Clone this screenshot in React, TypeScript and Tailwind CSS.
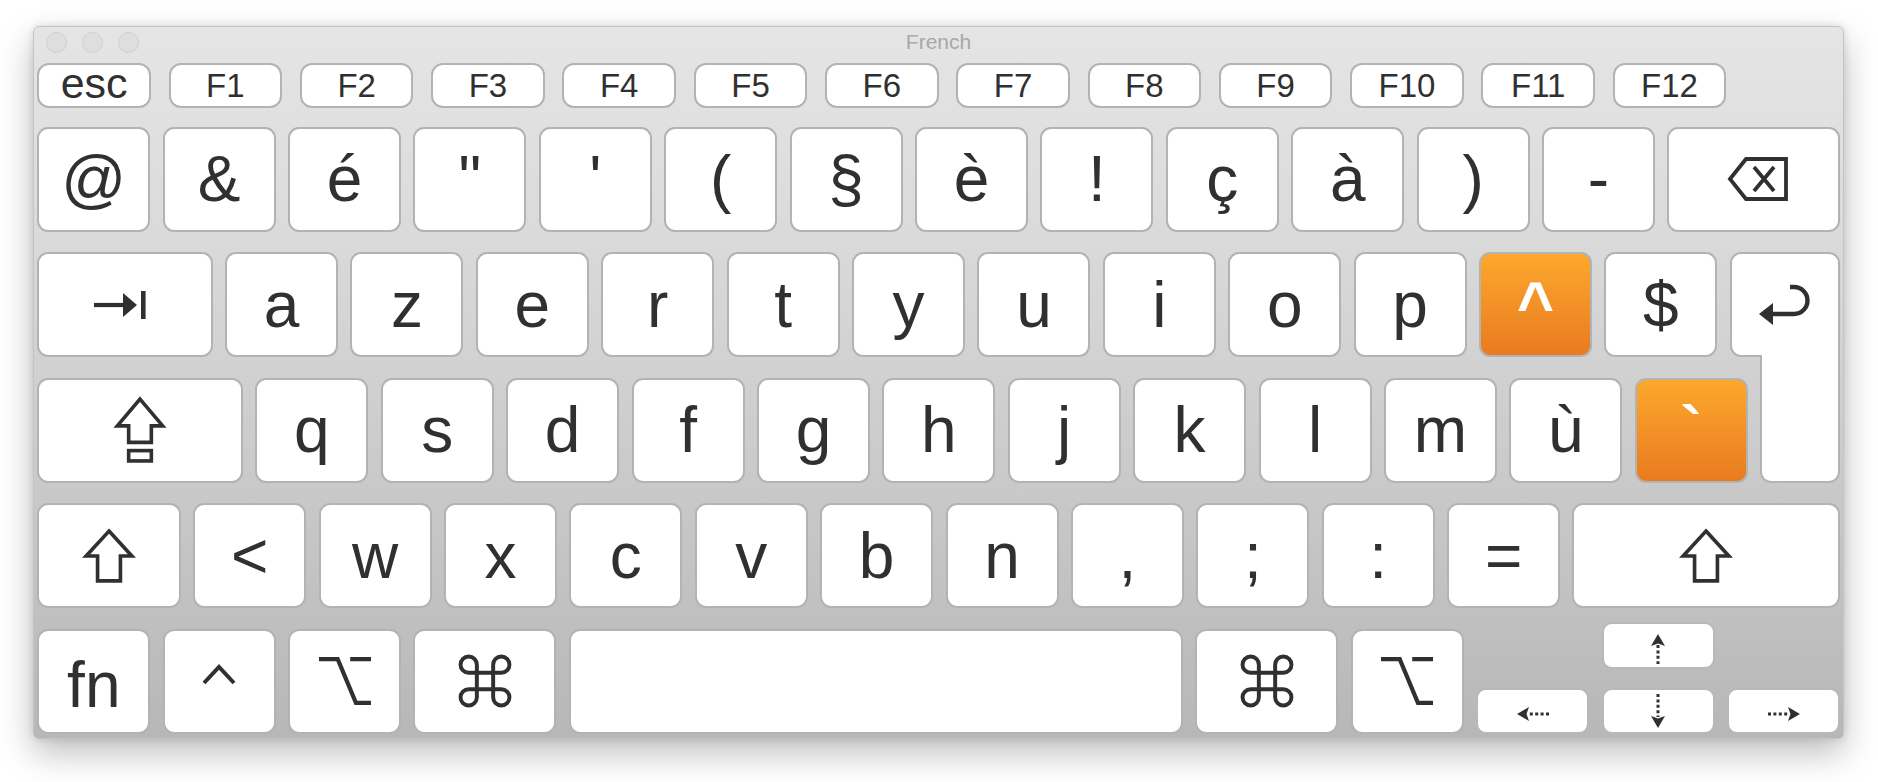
import React from "react";

const INK = "#303030";

type KeyProps = {
  w: string;
  children?: React.ReactNode;
  cls?: string;
  orange?: boolean;
};

function Key({ w, children, cls = "", orange = false }: KeyProps) {
  const tone = orange
    ? "bg-[linear-gradient(180deg,#fca82d_0%,#e97b20_100%)] text-white font-bold"
    : "bg-white text-[#303030]";
  return (
    <div
      className={`${w} ${tone} h-[105px] shrink-0 rounded-[11px] border-2 border-[#b3b3b3] flex items-center justify-center text-[64px] leading-none ${cls}`}
    >
      {children}
    </div>
  );
}

function FKey({ children, cls = "" }: { children: React.ReactNode; cls?: string }) {
  return (
    <div
      className={`w-[113.6px] h-[45px] shrink-0 rounded-[12px] border-2 border-[#b3b3b3] bg-white flex items-center justify-center leading-none text-[#303030] ${cls}`}
    >
      {children}
    </div>
  );
}

function ShiftIcon() {
  return (
    <svg width="50" height="54" viewBox="0 0 48 52" fill="none" overflow="visible">
      <path d="M24 2 L46 26 H35 V50 H13 V26 H2 Z" stroke={INK} strokeWidth="3.5" strokeLinejoin="miter" />
    </svg>
  );
}

function CapsIcon() {
  return (
    <svg width="50" height="66" viewBox="0 0 48 64" fill="none" overflow="visible">
      <path d="M24 2 L46 28 H35 V44 H13 V28 H2 Z" stroke={INK} strokeWidth="3.5" strokeLinejoin="miter" />
      <rect x="13" y="52" width="22" height="10" stroke={INK} strokeWidth="3.5" />
    </svg>
  );
}

function TabIcon() {
  return (
    <svg width="54" height="30" viewBox="0 0 54 30" fill="none">
      <line x1="0" y1="15" x2="32" y2="15" stroke={INK} strokeWidth="4.2" />
      <polygon points="29,3 43,15 29,27" fill={INK} />
      <rect x="47" y="1" width="4.6" height="28" fill={INK} />
    </svg>
  );
}

function BackspaceIcon() {
  return (
    <svg width="60" height="46" viewBox="0 0 60 46" fill="none" overflow="visible">
      <path d="M2 23 L18 3 H58 V43 H18 Z" stroke={INK} strokeWidth="3.8" strokeLinejoin="miter" />
      <path d="M26 11 L46 35 M46 11 L26 35" stroke={INK} strokeWidth="3.8" />
    </svg>
  );
}

function ReturnIcon() {
  return (
    <svg width="52" height="46" viewBox="0 0 52 46" fill="none" overflow="visible">
      <polygon points="0,31 14,20 14,42" fill={INK} />
      <path d="M12 31 H35 A13.5 13.5 0 0 0 35 4 H31" stroke={INK} strokeWidth="4.4" />
    </svg>
  );
}

function OptionIcon() {
  return (
    <svg width="52" height="50" viewBox="0 0 50 48" fill="none">
      <path d="M0 3 H18 L35.5 45 H50 M30 3 H50" stroke={INK} strokeWidth="4" />
    </svg>
  );
}

function CommandIcon() {
  return (
    <svg width="56" height="56" viewBox="1.7 1.7 20.6 20.6" fill="none">
      <path
        d="M15 6v12a3 3 0 1 0 3-3H6a3 3 0 1 0 3 3V6a3 3 0 1 0-3 3h12a3 3 0 1 0-3-3"
        stroke={INK}
        strokeWidth="1.45"
      />
    </svg>
  );
}

function ControlIcon() {
  return (
    <svg width="34" height="22" viewBox="0 0 34 22" fill="none">
      <path d="M2 19 L17 3 L32 19" stroke={INK} strokeWidth="4" />
    </svg>
  );
}

function ArrowRight() {
  return (
    <svg width="32" height="16" viewBox="0 0 32 16" fill="none">
      <line x1="0" y1="8" x2="21" y2="8" stroke={INK} strokeWidth="3.2" strokeDasharray="3 2.4" />
      <path d="M20 1 L32 8 L20 15 L22.5 8 Z" fill={INK} />
    </svg>
  );
}

function ArrowLeft() {
  return (
    <svg width="32" height="16" viewBox="0 0 32 16" fill="none">
      <line x1="32" y1="8" x2="11" y2="8" stroke={INK} strokeWidth="3.2" strokeDasharray="3 2.4" />
      <path d="M12 1 L0 8 L12 15 L9.5 8 Z" fill={INK} />
    </svg>
  );
}

function ArrowUp() {
  return (
    <svg width="16" height="30" viewBox="0 0 16 30" fill="none">
      <path d="M8 0 L15 12 L8 9.5 L1 12 Z" fill={INK} />
      <line x1="8" y1="11" x2="8" y2="30" stroke={INK} strokeWidth="3" strokeDasharray="3 2.4" />
    </svg>
  );
}

function ArrowDown() {
  return (
    <svg width="16" height="34" viewBox="0 0 16 34" fill="none">
      <line x1="8" y1="0" x2="8" y2="23" stroke={INK} strokeWidth="3" strokeDasharray="3 2.4" />
      <path d="M8 34 L15 22 L8 24.5 L1 22 Z" fill={INK} />
    </svg>
  );
}

const ROW1 = ["@", "&", "é", "\"", "'", "(", "§", "è", "!", "ç", "à", ")", "-"];
const ROW2 = ["a", "z", "e", "r", "t", "y", "u", "i", "o", "p"];
const ROW3 = ["q", "s", "d", "f", "g", "h", "j", "k", "l", "m", "ù"];
const ROW4 = ["<", "w", "x", "c", "v", "b", "n", ",", ";", ":", "="];
const FKEYS = ["F1", "F2", "F3", "F4", "F5", "F6", "F7", "F8", "F9", "F10", "F11", "F12"];

export default function App() {
  return (
    <div className="w-[1878px] h-[782px] bg-white pl-[33px] pt-[26px] font-['Liberation_Sans',Arial,Helvetica,sans-serif]">
      <div className="w-[1811px] h-[713px] rounded-t-[6px] rounded-b-[5px] border border-[#c4c4c4] bg-[linear-gradient(180deg,#e5e5e5_0%,#dcdcdc_25%,#c9c9c9_65%,#b7b7b7_100%)] shadow-[0_14px_34px_rgba(0,0,0,0.26),0_0_8px_rgba(0,0,0,0.12)] flex flex-col">
        {/* title bar */}
        <div className="h-[36px] grid grid-cols-[1fr_auto_1fr] items-start">
          <div className="flex gap-[15px] pl-[12px] pt-[5px]">
            <div className="w-[21px] h-[21px] rounded-full bg-[#dedede] border border-[#cfcfcf]" />
            <div className="w-[21px] h-[21px] rounded-full bg-[#dedede] border border-[#cfcfcf]" />
            <div className="w-[21px] h-[21px] rounded-full bg-[#dedede] border border-[#cfcfcf]" />
          </div>
          <div className="text-[21px] leading-[28px] text-[#a8a8a8] pt-[1px]">French</div>
          <div />
        </div>

        {/* keys */}
        <div className="pl-[3.3px] pr-[3px] flex flex-col">
          <div className="flex gap-[17.7px] h-[45px]">
            <FKey cls="text-[43px] pb-[5px]">esc</FKey>
            {FKEYS.map((f) => (
              <FKey key={f} cls="text-[33px]">
                {f}
              </FKey>
            ))}
          </div>

          <div className="mt-[18.7px] flex flex-col gap-[20.5px]">
            {/* row 1 */}
            <div className="flex gap-[12.4px]">
              {ROW1.map((k) => (
                <Key key={k} w="w-[113px]">
                  {k}
                </Key>
              ))}
              <Key w="flex-1" cls="pl-[8px]">
                <BackspaceIcon />
              </Key>
            </div>

            {/* row 2 */}
            <div className="flex gap-[12.4px]">
              <Key w="w-[175.4px]" cls="pr-[8px]">
                <TabIcon />
              </Key>
              {ROW2.map((k) => (
                <Key key={k} w="w-[113px]">
                  {k}
                </Key>
              ))}
              <Key w="w-[113px]" orange>
                ^
              </Key>
              <Key w="w-[113px]">$</Key>
              <div className="flex-1 h-[105px] rounded-t-[11px] rounded-bl-[11px] border-2 border-[#b3b3b3] bg-white flex items-center justify-center pt-[2px]">
                <ReturnIcon />
              </div>
            </div>

            {/* row 3 */}
            <div className="flex gap-[12.4px] items-start">
              <Key w="w-[205.7px]">
                <CapsIcon />
              </Key>
              {ROW3.map((k) => (
                <Key key={k} w="w-[113px]">
                  {k}
                </Key>
              ))}
              <Key w="w-[113px]" orange>
                `
              </Key>
              <div className="relative z-10 flex-1 -mt-[22.5px] h-[127.5px] rounded-b-[11px] border-2 border-t-0 border-[#b3b3b3] bg-white" />
            </div>

            {/* row 4 */}
            <div className="flex gap-[12.4px]">
              <Key w="w-[143.5px]">
                <ShiftIcon />
              </Key>
              {ROW4.map((k) => (
                <Key key={k} w="w-[113px]">
                  {k}
                </Key>
              ))}
              <Key w="flex-1">
                <ShiftIcon />
              </Key>
            </div>

            {/* row 5 */}
            <div className="flex gap-[12.4px] items-end h-[105px]">
              <Key w="w-[113px]" cls="text-[56px] pt-[7px]">
                fn
              </Key>
              <Key w="w-[113px]" cls="pb-[12px]">
                <ControlIcon />
              </Key>
              <Key w="w-[113px]">
                <OptionIcon />
              </Key>
              <Key w="w-[143px]">
                <CommandIcon />
              </Key>
              <Key w="flex-1">{""}</Key>
              <Key w="w-[143px]">
                <CommandIcon />
              </Key>
              <Key w="w-[113px]">
                <OptionIcon />
              </Key>
              <div className="w-[113px] h-[46px] shrink-0 rounded-[10px] border-2 border-[#b8b8b8] bg-white flex items-center justify-center pt-[6px]">
                <ArrowLeft />
              </div>
              <div className="w-[113px] h-[112px] shrink-0 flex flex-col justify-between">
                <div className="h-[47px] rounded-[10px] border-2 border-[#b8b8b8] bg-white flex items-center justify-center pt-[7px]">
                  <ArrowUp />
                </div>
                <div className="h-[46px] rounded-[10px] border-2 border-[#b8b8b8] bg-white flex items-center justify-center">
                  <ArrowDown />
                </div>
              </div>
              <div className="w-[113px] h-[46px] shrink-0 rounded-[10px] border-2 border-[#b8b8b8] bg-white flex items-center justify-center pt-[6px]">
                <ArrowRight />
              </div>
            </div>
          </div>
        </div>
      </div>
    </div>
  );
}
